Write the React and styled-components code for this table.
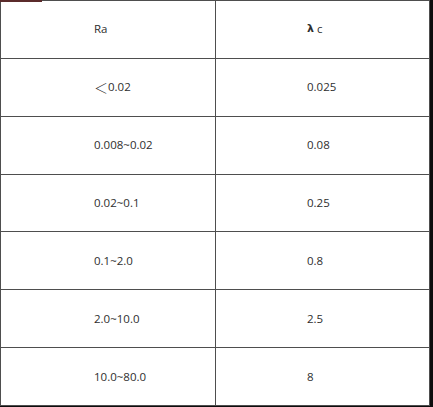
import React from "react";
import styled, { createGlobalStyle } from "styled-components";

const GlobalStyle = createGlobalStyle`
  html, body {
    margin: 0;
    padding: 0;
    background: #0d0d0d;
  }
`;

const Frame = styled.div`
  position: relative;
  width: 433px;
  height: 407px;
  background: #0d0d0d;
`;

const Table = styled.div`
  display: grid;
  grid-template-columns: 214px 213px;
  grid-template-rows: repeat(7, 1fr);
  gap: 1px;
  padding: 1px;
  width: 430px;
  height: 406px;
  box-sizing: border-box;
  background: #4e4e4e;
`;

const Mark = styled.div`
  position: absolute;
  left: 0;
  top: 0;
  width: 42px;
  height: 2px;
  background: #5b2b2b;
`;

const Cell = styled.div`
  display: flex;
  align-items: center;
  padding-left: ${(p) => (p.$right ? "91px" : "93px")};
  padding-bottom: 1px;
  background: #fff;
  color: #2e2e2e;
  font-family: "Open Sans", "Noto Sans CJK SC", sans-serif;
  font-size: 11.5px;
  white-space: nowrap;
`;

const Lt = styled.span`
  font-family: "Noto Sans CJK SC", sans-serif;
  font-size: 14px;
  font-weight: 300;
`;

const Lambda = styled.span`
  font-family: "DejaVu Sans", sans-serif;
  font-weight: 600;
  font-size: 11px;
  margin-right: 3px;
`;

const rows = [
  [<>Ra</>, <><Lambda>λ</Lambda>c</>],
  [<><Lt>＜</Lt>0.02</>, "0.025"],
  ["0.008~0.02", "0.08"],
  ["0.02~0.1", "0.25"],
  ["0.1~2.0", "0.8"],
  ["2.0~10.0", "2.5"],
  ["10.0~80.0", "8"],
];

const App = () => {
  return (
    <Frame>
      <GlobalStyle />
      <Table>
        {rows.map((r, i) => (
          <React.Fragment key={i}>
            <Cell>{r[0]}</Cell>
            <Cell $right>{r[1]}</Cell>
          </React.Fragment>
        ))}
      </Table>
      <Mark />
    </Frame>
  );
};

export default App;
